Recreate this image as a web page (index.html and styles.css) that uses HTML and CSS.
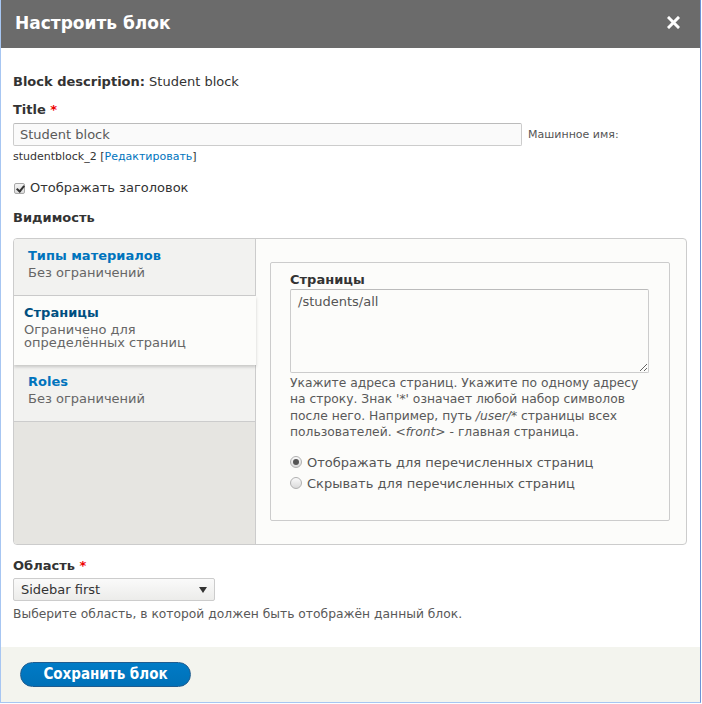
FILE: index.html
```html
<!DOCTYPE html>
<html lang="ru">
<head>
<meta charset="utf-8">
<title>Настроить блок</title>
<link rel="stylesheet" href="styles.css">
</head>
<body>
<div class="dialog">
  <div class="titlebar">
    <span class="dialog-title">Настроить блок</span>
    <button class="close" type="button" aria-label="Закрыть">
      <svg width="13" height="13" viewBox="0 0 13 13"><path d="M2 2 L11 11 M11 2 L2 11" stroke="#fff" stroke-width="3" stroke-linecap="square"/></svg>
    </button>
  </div>
  <div class="content">
    <div class="desc-line"><strong>Block description:</strong> Student block</div>

    <label class="label title-label">Title <span class="req">*</span></label>
    <div class="input-row">
      <input class="text-input" type="text" value="Student block">
      <span class="machine">Машинное имя:</span>
    </div>
    <div class="machine-value">studentblock_2 [<a href="#">Редактировать</a>]</div>

    <label class="check-row"><input type="checkbox" class="cb" checked> Отображать заголовок</label>

    <div class="label vis-label">Видимость</div>

    <div class="vtabs">
      <ul class="vtabs-menu">
        <li class="vtab">
          <a href="#" class="vtab-title">Типы материалов</a>
          <div class="vtab-summary">Без ограничений</div>
        </li>
        <li class="vtab selected">
          <a href="#" class="vtab-title">Страницы</a>
          <div class="vtab-summary">Ограничено для<br>определённых страниц</div>
        </li>
        <li class="vtab last">
          <a href="#" class="vtab-title">Roles</a>
          <div class="vtab-summary">Без ограничений</div>
        </li>
      </ul>
      <div class="vtabs-pane">
        <div class="fieldset">
          <div class="label pages-label">Страницы</div>
          <textarea class="pages">/students/all</textarea>
          <div class="help">Укажите адреса страниц. Укажите по одному адресу на строку. Знак '*' означает любой набор символов после него. Например, путь <em>/user/*</em> страницы всех пользователей. <em>&lt;front&gt;</em> - главная страница.</div>
          <div class="radios">
            <label class="radio-row"><input type="radio" name="vis" class="rd" checked> Отображать для перечисленных страниц</label>
            <label class="radio-row"><input type="radio" name="vis" class="rd"> Скрывать для перечисленных страниц</label>
          </div>
        </div>
      </div>
    </div>

    <label class="label region-label">Область <span class="req">*</span></label>
    <div class="select">
      <span>Sidebar first</span>
      <span class="arrow"></span>
    </div>
    <div class="help region-help">Выберите область, в которой должен быть отображён данный блок.</div>
  </div>
  <div class="footer">
    <button class="save" type="button">Сохранить блок</button>
  </div>
</div>
</body>
</html>
```

FILE: styles.css
```css
* { box-sizing: border-box; }
html, body { margin: 0; padding: 0; background: #fff; }
body {
  font-family: "DejaVu Sans", "Noto Sans", sans-serif;
  font-size: 13px;
  color: #333;
}
.dialog {
  width: 701px;
  height: 703px;
  border-left: 1px solid #a7c6f2;
  border-right: 1px solid #6d93d6;
  border-bottom: 1px solid #a7c6f2;
  display: flex;
  flex-direction: column;
  background: #fff;
}
.titlebar {
  height: 48px;
  background: #6b6b6b;
  display: flex;
  align-items: center;
  justify-content: space-between;
  padding: 0 20px 0 14px;
  flex: none;
}
.dialog-title {
  color: #fff;
  font-weight: bold;
  font-size: 17px;
  margin-top: -3px;
}
.close {
  border: 0;
  background: none;
  padding: 0;
  width: 13px;
  height: 13px;
  display: flex;
  margin-top: -3px;
}
.content {
  flex: 1;
  padding: 25px 12px 0 12px;
}
.desc-line { line-height: 18px; }
.label {
  display: block;
  font-weight: bold;
  line-height: 18px;
}
.title-label { margin-top: 10px; }
.req { color: #e00; }
.input-row {
  display: flex;
  align-items: center;
  margin-top: 4px;
}
.text-input {
  width: 509px;
  height: 23px;
  border: 1px solid #ccc;
  border-top-color: #bbb;
  border-radius: 2px;
  background: #fafafa;
  font-family: inherit;
  font-size: 13px;
  color: #595959;
  padding: 0 6px;
  margin: 0;
}
.machine {
  font-size: 11px;
  color: #555;
  margin-left: 6px;
}
.machine-value {
  font-size: 11px;
  line-height: 14px;
  margin-top: 4px;
  color: #333;
}
a { color: #0074bd; text-decoration: none; }
.check-row {
  display: flex;
  align-items: center;
  line-height: 18px;
  margin-top: 15px;
  gap: 5px;
}
.cb {
  appearance: none;
  -webkit-appearance: none;
  width: 11px;
  height: 11px;
  margin: 0 0 0 1px;
  border: 1px solid #a8a8a8;
  border-radius: 2px;
  background: linear-gradient(#f4f4f4, #dcdcdc);
  position: relative;
}
.cb:checked::after {
  content: "";
  position: absolute;
  left: 3px;
  top: 0px;
  width: 3px;
  height: 6px;
  border: solid #333;
  border-width: 0 2px 2px 0;
  transform: rotate(40deg);
}
.vis-label { margin-top: 12px; }
.vtabs {
  margin-top: 11px;
  width: 674px;
  height: 307px;
  border: 1px solid #ccc;
  border-radius: 4px;
  display: flex;
  background: #fcfcfa;
  overflow: hidden;
}
.vtabs-menu {
  list-style: none;
  margin: 0;
  padding: 0;
  width: 242px;
  flex: none;
  background: #e6e5e1;
  border-right: 1px solid #ccc;
}
.vtab {
  background: #f2f2f0;
  padding: 8px 15px 16px 14px;
  border-bottom: 1px solid #ccc;
}
.vtab-title {
  display: block;
  font-weight: bold;
  line-height: 17px;
  color: #0074bd;
}
.vtab-summary {
  margin-top: 2px;
  line-height: 13px;
  color: #666;
}
.vtab.selected {
  background: #fcfcfa;
  padding-left: 10px;
  margin-right: -1px;
  border-bottom: 0;
  box-shadow: 0 2px 3px rgba(0, 0, 0, 0.18);
  position: relative;
  z-index: 1;
}
.vtab.selected .vtab-title { color: #004f80; }
.vtabs-pane {
  flex: 1;
  padding: 23px 16px 23px 14px;
}
.fieldset {
  height: 259px;
  border: 1px solid #ccc;
  border-radius: 2px;
  background: #fcfcfa;
  padding: 8px 19px 0 19px;
}
.pages {
  display: block;
  width: 359px;
  height: 84px;
  margin: 0;
  border: 1px solid #ccc;
  border-top-color: #bbb;
  border-radius: 2px;
  background: #fcfcfa;
  font-family: inherit;
  font-size: 13px;
  color: #555;
  padding: 3px 7px;
  line-height: 18px;
}
.help {
  font-size: 12.3px;
  line-height: 16.4px;
  color: #595959;
  margin-top: 2px;
}
.help em { font-style: italic; }
.radios { margin-top: 11px; }
.radio-row {
  display: flex;
  align-items: center;
  gap: 5px;
  line-height: 21px;
  color: #555;
}
.rd {
  appearance: none;
  -webkit-appearance: none;
  width: 12px;
  height: 12px;
  margin: 0;
  border: 1px solid #b0b0b0;
  border-radius: 50%;
  background: linear-gradient(#fafafa, #dadada);
  position: relative;
}
.rd:checked::after {
  content: "";
  position: absolute;
  left: 2px;
  top: 2px;
  width: 6px;
  height: 6px;
  border-radius: 50%;
  background: #555;
}
.region-label { margin-top: 12px; }
.select {
  margin-top: 3px;
  width: 202px;
  height: 23px;
  border: 1px solid #ccc;
  border-radius: 2px;
  background: linear-gradient(#fafafa, #ececea);
  display: flex;
  align-items: center;
  justify-content: space-between;
  padding: 0 6px 0 7px;
  font-size: 13px;
  color: #333;
}
.arrow {
  width: 0;
  height: 0;
  border-left: 4px solid transparent;
  border-right: 4px solid transparent;
  border-top: 6px solid #333;
  margin-right: 1px;
}
.region-help { margin-top: 5px; line-height: 16px; }
.footer {
  flex: none;
  height: 55px;
  background: #f3f4ee;
  padding: 15px 0 0 19px;
}
.save {
  width: 171px;
  height: 25px;
  border: 1px solid #1e5c90;
  border-radius: 20px;
  background: linear-gradient(#007bc6, #0071b8);
  color: #fff;
  font-family: "DejaVu Sans Condensed", "DejaVu Sans", sans-serif;
  font-stretch: condensed;
  font-weight: bold;
  font-size: 15px;
  padding: 0;
  line-height: 23px;
}
```
